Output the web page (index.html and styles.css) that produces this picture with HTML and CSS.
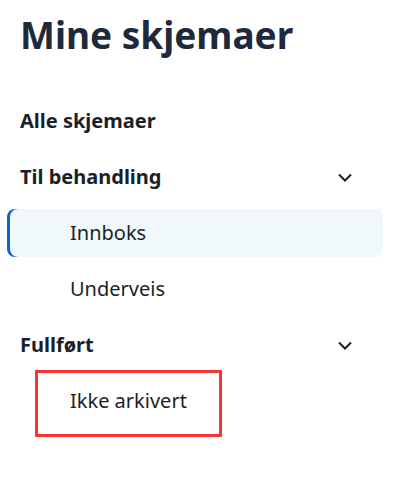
FILE: index.html
```html
<!DOCTYPE html>
<html lang="no">
<head>
<meta charset="utf-8">
<title>Mine skjemaer</title>
<link rel="stylesheet" href="styles.css">
</head>
<body>
<div class="page">
  <h1 class="title">Mine skjemaer</h1>
  <nav class="nav">
    <ul class="nav-list">
      <li class="nav-item top">Alle skjemaer</li>
      <li class="nav-item top group">
        <span>Til behandling</span>
        <svg class="chev" width="24" height="24" viewBox="0 0 24 24"><path d="M6 9.5 L12 15.5 L18 9.5" fill="none" stroke="#1a1f29" stroke-width="2"/></svg>
      </li>
      <li class="nav-item sub active">Innboks</li>
      <li class="nav-item sub">Underveis</li>
      <li class="nav-item top group">
        <span>Fullført</span>
        <svg class="chev" width="24" height="24" viewBox="0 0 24 24"><path d="M6 9.5 L12 15.5 L18 9.5" fill="none" stroke="#1a1f29" stroke-width="2"/></svg>
      </li>
      <li class="marked"><span class="mark">Ikke arkivert</span></li>
    </ul>
  </nav>
</div>
</body>
</html>
```
FILE: styles.css
```css
html, body {
  margin: 0;
  padding: 0;
  background: #ffffff;
}
body {
  font-family: "Noto Sans", "Open Sans", sans-serif;
  color: #1a1f29;
}
.page {
  padding: 13px 12px 0 7px;
}
.title {
  margin: 0 0 40px 13px;
  font-size: 37px;
  line-height: 44px;
  font-weight: 700;
  color: #1e2a3b;
}
.nav-list {
  list-style: none;
  margin: 0;
  padding: 0;
  display: flex;
  flex-direction: column;
  gap: 8px;
}
.nav-item {
  height: 48px;
  line-height: 48px;
  font-size: 20px;
  box-sizing: border-box;
}
.top {
  font-weight: 700;
  padding-left: 13px;
}
.group {
  display: flex;
  align-items: center;
  justify-content: space-between;
  padding-right: 26px;
}
.chev {
  display: block;
}
.sub {
  padding-left: 63px;
}
.active {
  background: #f1f8fc;
  border-radius: 8px;
  box-shadow: inset 3px 0 0 #0b63d6;
}
.marked {
  margin-top: -7px;
  font-size: 20px;
}
.mark {
  display: block;
  width: fit-content;
  margin-left: 28px;
  padding: 4px 32px 9px 32px;
  border: 3px solid #f53535;
  line-height: 48px;
}
```
